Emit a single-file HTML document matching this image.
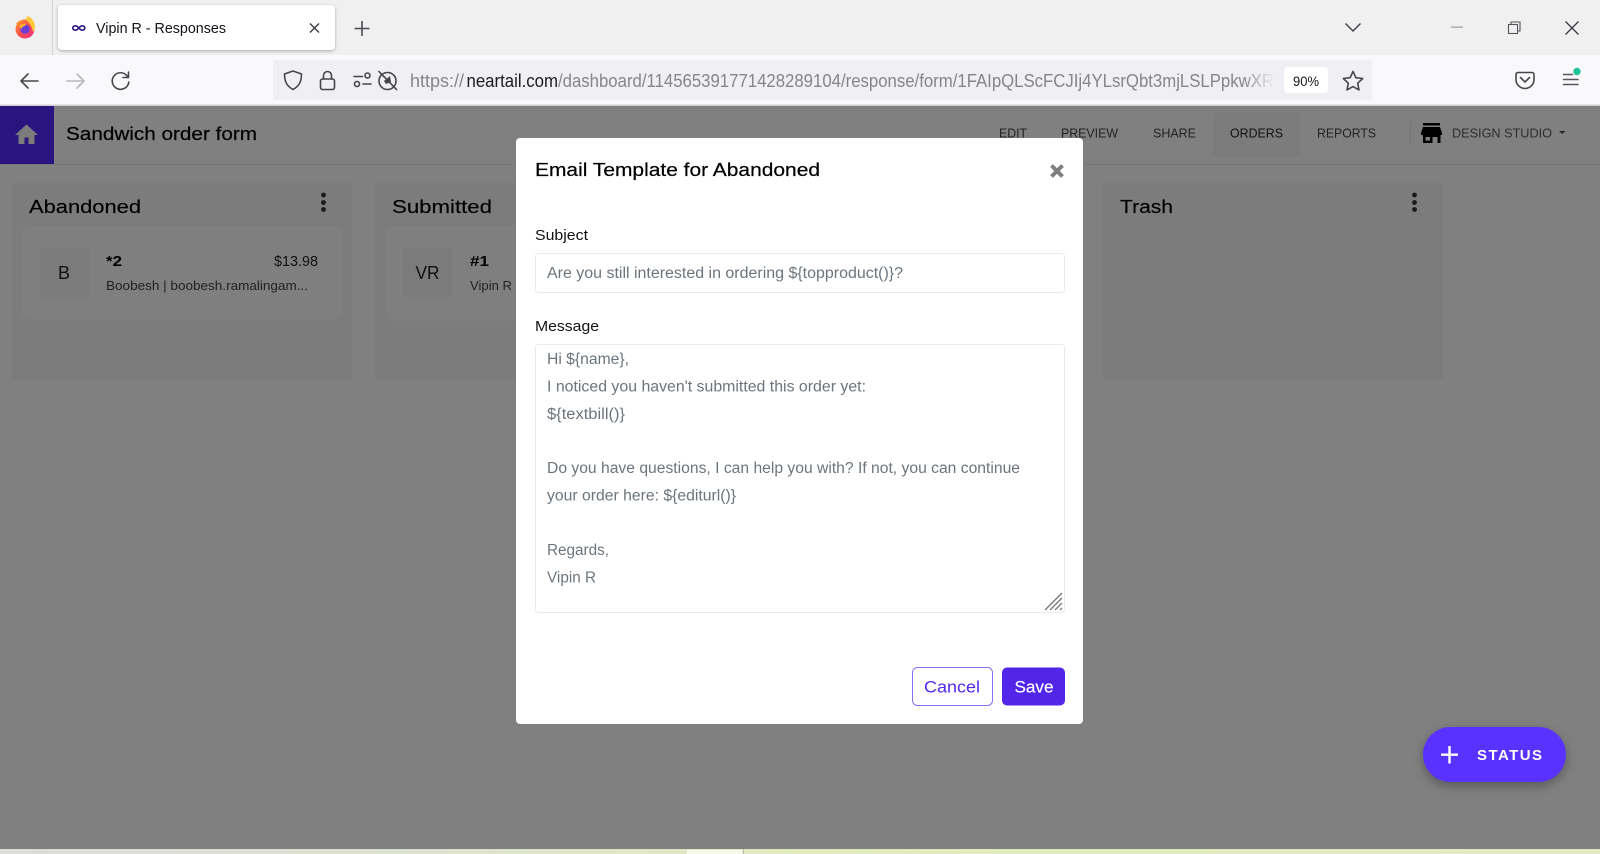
<!DOCTYPE html>
<html lang="en"><head><meta charset="utf-8"><title>Vipin R - Responses</title>
<style>
html,body{margin:0;padding:0;width:1600px;height:854px;overflow:hidden;background:#808080}
svg{display:block}
text{font-family:"Liberation Sans",sans-serif;white-space:pre}
.ic{fill:none;stroke:#45454d;stroke-width:1.6;stroke-linecap:round;stroke-linejoin:round}
</style></head><body>
<svg width="1600" height="854" viewBox="0 0 1600 854" xmlns="http://www.w3.org/2000/svg">
<defs>
<linearGradient id="strip" x1="0" x2="1" y1="0" y2="0"><stop offset="0" stop-color="#dcdcd8"/><stop offset=".3" stop-color="#dfe3cf"/><stop offset=".5" stop-color="#e1e9bd"/><stop offset="1" stop-color="#e4ebc4"/></linearGradient>
<linearGradient id="fade" x1="0" x2="1" y1="0" y2="0"><stop offset="0" stop-color="#f0f0f4" stop-opacity="0"/><stop offset="1" stop-color="#f0f0f4"/></linearGradient>
<linearGradient id="ff" x1="0" x2="1" y1="0" y2="1"><stop offset="0" stop-color="#ff9a2e"/><stop offset=".55" stop-color="#ff4a50"/><stop offset="1" stop-color="#e02a90"/></linearGradient>
<filter id="tabsh" x="-5%" y="-20%" width="110%" height="140%"><feDropShadow dx="0" dy="1" stdDeviation="1.6" flood-color="#000" flood-opacity=".3"/></filter>
<filter id="fabsh" x="-20%" y="-40%" width="140%" height="200%"><feDropShadow dx="0" dy="4" stdDeviation="5" flood-color="#000" flood-opacity=".3"/></filter>
</defs>

<!-- tab strip -->
<rect width="1600" height="55" fill="#f0f0f0"/>
<rect x="52" y="0" width="1" height="55" fill="#d4d4d4"/>
<circle cx="25" cy="29" r="9.5" fill="url(#ff)"/>
<path d="M25 19c3-1 2-2 2-3 4 1 8 5 8 11 0 2-1 4-2 5-1-6-4-10-8-13z" fill="#ffc93a"/>
<path d="M16 24c2-3 5-4 8-4-1 1-2 2-2 3z" fill="#ff8a2a"/>
<circle cx="25" cy="29" r="4.8" fill="#6a3bd6"/>
<path d="M19 26c2-2 5-3 7-2l-1 2c-2 0-3 1-3 3z" fill="#ffb02e"/>

<rect x="58" y="5" width="277" height="45" rx="4" fill="#fff" filter="url(#tabsh)"/>
<path d="M75.500 25.800c-3.600 0-3.600 4.400 0 4.400 2.600 0 4.200-4.400 6.600-4.400 3.600 0 3.600 4.400 0 4.400-2.400 0-4-4.400-6.600-4.400z" fill="none" stroke="#2f1a7f" stroke-width="1.7"/>
<text x="96" y="33" font-size="14.5" fill="#15141a" textLength="130" lengthAdjust="spacingAndGlyphs">Vipin R - Responses</text>
<path d="M310 23.500l9 9M319 23.500l-9 9" fill="none" stroke="#3a3a42" stroke-width="1.400"/>
<path d="M362 21v15M354.500 28.500h15" fill="none" stroke="#4a4a52" stroke-width="1.600"/>
<path d="M1345.500 23.500l7.500 7.500 7.500-7.500" fill="none" stroke="#45454d" stroke-width="1.500"/>
<rect x="1451" y="26.500" width="12" height="1.200" fill="#9a9a9a"/>
<path d="M1511 24v-2h9v9h-2" fill="none" stroke="#55555c" stroke-width="1.100"/><rect x="1508.500" y="24.500" width="9" height="9" fill="#f0f0f0" stroke="#55555c" stroke-width="1.100"/>
<path d="M1565.500 21.500l13 13M1578.500 21.500l-13 13" fill="none" stroke="#3a3a42" stroke-width="1.300"/>

<!-- toolbar -->
<rect y="55" width="1600" height="50" fill="#f9f9fb"/>
<path d="M21 81h17M21 81l7-7M21 81l7 7" class="ic"/>
<path d="M84 81H67M84 81l-7-7M84 81l-7 7" fill="none" stroke="#b8b8bc" stroke-width="1.600" stroke-linecap="round" stroke-linejoin="round"/>
<path d="M127.500 76.500a8.300 8.300 0 1 0 1.300 5.500" class="ic"/><path d="M128.500 72v5.500H123" class="ic"/>
<rect x="273" y="60" width="1099" height="40" rx="4" fill="#f0f0f4"/>
<path d="M293 71l8.500 3c0 7-2 12-8.500 15.500-6.500-3.500-8.500-8.500-8.500-15.500z" class="ic"/>
<rect x="320.500" y="79" width="14" height="10.500" rx="2" class="ic"/><path d="M323.500 79v-3.500a4 4 0 0 1 8 0V79" class="ic"/>
<path d="M354 76.500h8.500M363 84h8" class="ic"/><circle cx="367.500" cy="75.500" r="2.500" class="ic"/><circle cx="357" cy="84" r="2.500" class="ic"/>
<circle cx="387.500" cy="81" r="8.500" class="ic"/><path d="M379 71.500l17.500 18" class="ic"/><path d="M384 81l6-5 1 6-5 2z" fill="#45454d"/>
<text x="410" y="87" font-size="18" fill="#85858a" textLength="54" lengthAdjust="spacingAndGlyphs">https://</text>
<text x="466.500" y="87" font-size="18" fill="#1a1a20" textLength="91.500" lengthAdjust="spacingAndGlyphs">neartail.com</text>
<text x="558" y="87" font-size="18" fill="#85858a" textLength="716" lengthAdjust="spacingAndGlyphs">/dashboard/114565391771428289104/response/form/1FAIpQLScFCJIj4YLsrQbt3mjLSLPpkwXR</text>
<rect x="1244" y="62" width="30" height="36" fill="url(#fade)"/>
<rect x="1274" y="62" width="8" height="36" fill="#f0f0f4"/>
<rect x="1284" y="67" width="44" height="26" rx="3" fill="#fff"/>
<text x="1293" y="86" font-size="13.500" fill="#15141a" textLength="26" lengthAdjust="spacingAndGlyphs">90%</text>
<path d="M1353 71.500l2.900 6.200 6.800.8-5 4.700 1.300 6.700-6-3.300-6 3.300 1.300-6.700-5-4.700 6.800-.8z" class="ic"/>
<path d="M1518 72.500h14a2 2 0 0 1 2 2v5a9 9 0 0 1-18 0v-5a2 2 0 0 1 2-2z" class="ic"/><path d="M1520.500 77.500l4.500 4.500 4.500-4.500" class="ic"/>
<path d="M1563.500 74.500h9M1563.500 79.500h14.500M1563.500 84.500h14.500" fill="none" stroke="#55555c" stroke-width="1.500" stroke-linecap="round"/>
<circle cx="1577" cy="71.500" r="3.700" fill="#1fc49b"/>
<rect y="104.500" width="1600" height="1.500" fill="#cfcfd4"/>

<!-- page under backdrop -->
<rect y="106" width="1600" height="743" fill="#808080"/>
<rect x="0" y="106" width="54" height="58" fill="#2a1580"/>
<path d="M26.500 124.500L15 135h3.500v9h6v-6.500h4v6.500h6v-9H38z" fill="#7c7c7c"/>
<text x="66" y="140" font-size="18" fill="#000" stroke="#000" stroke-width=".2" textLength="191" lengthAdjust="spacingAndGlyphs">Sandwich order form</text>
<rect y="164" width="1600" height="1" fill="#787878"/>
<rect x="1213" y="112" width="87" height="46" rx="5" fill="#7c7c7c"/>
<g font-size="13" fill="#222">
<text x="999" y="137.500" textLength="28" lengthAdjust="spacingAndGlyphs">EDIT</text>
<text x="1061" y="137.500" textLength="57" lengthAdjust="spacingAndGlyphs">PREVIEW</text>
<text x="1153" y="137.500" textLength="43" lengthAdjust="spacingAndGlyphs">SHARE</text>
<text x="1230" y="137.500" textLength="53" lengthAdjust="spacingAndGlyphs" fill="#111">ORDERS</text>
<text x="1317" y="137.500" textLength="59" lengthAdjust="spacingAndGlyphs">REPORTS</text>
<text x="1452" y="137.500" textLength="100" lengthAdjust="spacingAndGlyphs" fill="#2e2e2e">DESIGN STUDIO</text>
</g>
<rect x="1410" y="122" width="1" height="24" fill="#767676"/>
<path d="M1423 123h17v2.500h-17zM1423 127h17l2 6v2h-1.500v8h-3v-6h-5v6h-9.500v-8H1421v-2zM1425.500 137v3.500h4.500V137z" fill="#000" fill-rule="evenodd"/>
<path d="M1559 131h6.500l-3.250 3z" fill="#222"/>

<!-- columns -->
<rect x="12" y="183" width="340" height="197" rx="3" fill="#7c7c7c"/>
<rect x="375" y="183" width="342" height="197" rx="3" fill="#7c7c7c"/>
<rect x="1102" y="183" width="341" height="197" rx="3" fill="#7c7c7c"/>
<g font-size="18" fill="#000" stroke="#000" stroke-width=".15">
<text x="29" y="213" textLength="112" lengthAdjust="spacingAndGlyphs">Abandoned</text>
<text x="392" y="213" textLength="100" lengthAdjust="spacingAndGlyphs">Submitted</text>
<text x="1120" y="213" textLength="53" lengthAdjust="spacingAndGlyphs">Trash</text>
</g>
<g fill="#1a1a1a"><circle cx="323.500" cy="195" r="2.400"/><circle cx="323.500" cy="202.500" r="2.400"/><circle cx="323.500" cy="209.500" r="2.400"/>
<circle cx="1414.500" cy="195" r="2.400"/><circle cx="1414.500" cy="202.500" r="2.400"/><circle cx="1414.500" cy="209.500" r="2.400"/></g>

<rect x="22" y="226" width="320" height="93" rx="5" fill="#7f7f7f"/>
<rect x="40" y="248" width="50" height="49" rx="3" fill="#7b7b7b"/>
<text x="64" y="279" font-size="18" fill="#111" text-anchor="middle">B</text>
<text x="106" y="266" font-size="14.500" font-weight="700" fill="#000" textLength="16" lengthAdjust="spacingAndGlyphs">*2</text>
<text x="274" y="266" font-size="14.500" fill="#111" textLength="44" lengthAdjust="spacingAndGlyphs">$13.98</text>
<text x="106" y="290" font-size="13" fill="#222" textLength="202" lengthAdjust="spacingAndGlyphs">Boobesh | boobesh.ramalingam...</text>

<rect x="387" y="226" width="329" height="95" rx="5" fill="#7f7f7f"/>
<rect x="403" y="248" width="49" height="49" rx="3" fill="#7b7b7b"/>
<text x="427.500" y="279" font-size="18" fill="#111" text-anchor="middle" textLength="24" lengthAdjust="spacingAndGlyphs">VR</text>
<text x="470" y="266" font-size="14.500" font-weight="700" fill="#000" textLength="19" lengthAdjust="spacingAndGlyphs">#1</text>
<text x="470" y="290" font-size="13" fill="#222" textLength="42" lengthAdjust="spacingAndGlyphs">Vipin R</text>

<!-- modal -->
<rect x="516" y="138" width="567" height="586" rx="4" fill="#fff"/>
<text x="535" y="176" font-size="18" fill="#000" stroke="#000" stroke-width=".2" textLength="285" lengthAdjust="spacingAndGlyphs">Email Template for Abandoned</text>
<path d="M1051.500 165.500l11 11M1062.500 165.500l-11 11" fill="none" stroke="#7f7f7f" stroke-width="4"/>

<text x="535" y="240" font-size="15" fill="#111" textLength="53" lengthAdjust="spacingAndGlyphs">Subject</text>
<rect x="535.500" y="253.500" width="529" height="39" rx="3" fill="#fff" stroke="#e8eaec"/>
<text x="547" y="278" font-size="15.500" fill="#6c757d" textLength="356" lengthAdjust="spacingAndGlyphs">Are you still interested in ordering ${topproduct()}?</text>

<text x="535" y="331" font-size="15" fill="#111" textLength="64" lengthAdjust="spacingAndGlyphs">Message</text>
<rect x="535.500" y="344.500" width="529" height="268" rx="3" fill="#fff" stroke="#e8eaec"/>
<g font-size="15.500" fill="#6c757d">
<text x="547" y="364" textLength="82" lengthAdjust="spacingAndGlyphs">Hi ${name},</text>
<text x="547" y="391.500" textLength="319" lengthAdjust="spacingAndGlyphs">I noticed you haven't submitted this order yet:</text>
<text x="547" y="419" textLength="78" lengthAdjust="spacingAndGlyphs">${textbill()}</text>
<text x="547" y="473" textLength="473" lengthAdjust="spacingAndGlyphs">Do you have questions, I can help you with? If not, you can continue</text>
<text x="547" y="500.500" textLength="189" lengthAdjust="spacingAndGlyphs">your order here: ${editurl()}</text>
<text x="547" y="555" textLength="62" lengthAdjust="spacingAndGlyphs">Regards,</text>
<text x="547" y="582.500" textLength="49" lengthAdjust="spacingAndGlyphs">Vipin R</text>
</g>
<path d="M1045 610l17-17M1050 610l12-12M1055 610l7-7M1060 610l2-2" fill="none" stroke="#777" stroke-width="1.300"/>

<rect x="912.500" y="667.500" width="80" height="38" rx="5" fill="#fff" stroke="#8b70f5"/>
<text x="924" y="692.500" font-size="16.500" fill="#5128e8" textLength="56" lengthAdjust="spacingAndGlyphs">Cancel</text>
<rect x="1002" y="667.500" width="63" height="38" rx="5" fill="#5126e9"/>
<text x="1014.500" y="692.500" font-size="16.500" fill="#fff" stroke="#fff" stroke-width=".15" textLength="39" lengthAdjust="spacingAndGlyphs">Save</text>

<!-- FAB -->
<rect x="1423" y="727" width="143" height="55" rx="27.500" fill="#5a33ff" filter="url(#fabsh)"/>
<path d="M1449.500 746v17.500M1441 754.700h17" fill="none" stroke="#fff" stroke-width="2.400"/>
<text x="1477" y="760" font-size="15" font-weight="700" fill="#fff" textLength="65" lengthAdjust="spacing">STATUS</text>

<!-- bottom strip -->
<rect y="849" width="1600" height="5" fill="url(#strip)"/>
<rect x="687" y="850" width="55" height="4" fill="#f6f8ea"/>
<rect x="743" y="849" width="1" height="5" fill="#b9bcae"/>
</svg>
</body></html>
